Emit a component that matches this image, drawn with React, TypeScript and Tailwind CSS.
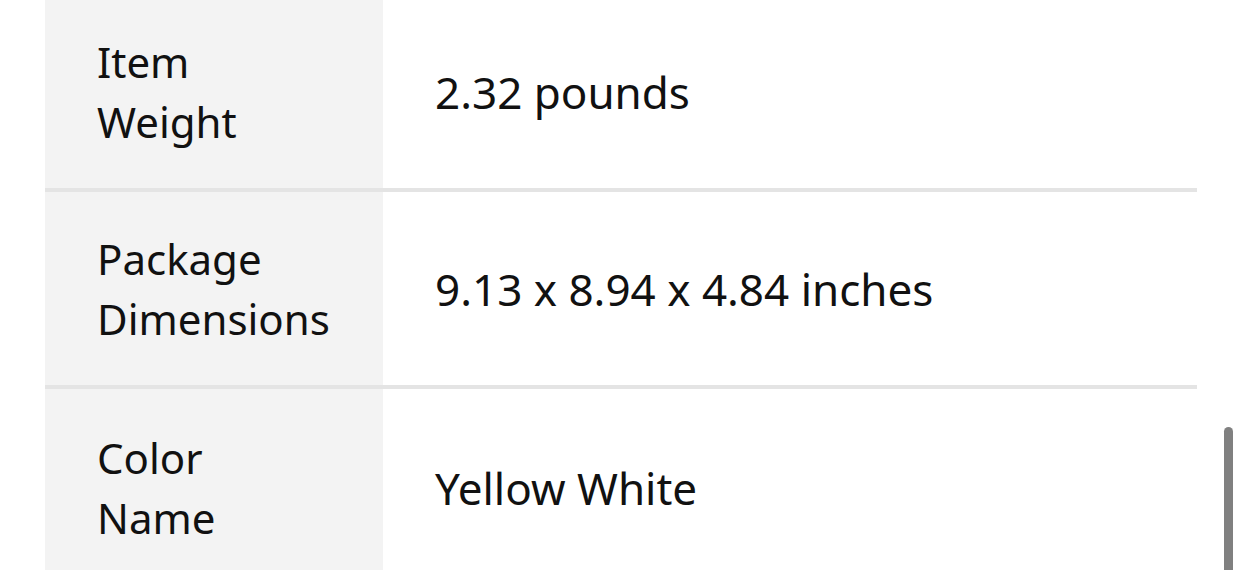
import React from 'react';

interface SpecRow {
    label: string[];
    value: string;
}

const rows: SpecRow[] = [
    { label: ['Item', 'Weight'], value: '2.32 pounds' },
    { label: ['Package', 'Dimensions'], value: '9.13 x 8.94 x 4.84 inches' },
    { label: ['Color', 'Name'], value: 'Yellow White' },
];

export default function App() {
    return (
        <div className="relative h-[570px] w-[1242px] overflow-hidden bg-white font-['Noto_Sans',sans-serif] text-[#111]">
            <div className="-mt-[5px] ml-[45px] w-[1152px]">
                {rows.map((row, i) => (
                    <div
                        key={row.value}
                        className={`flex h-[197px] ${i < rows.length - 1 ? 'border-b-4 border-[#e4e4e4]' : ''}`}
                    >
                        <div className="flex w-[338px] shrink-0 flex-col justify-center bg-[#f3f3f3] pl-[52px] text-[42px] leading-[60px]">
                            {row.label.map((l) => (
                                <span key={l}>{l}</span>
                            ))}
                        </div>
                        <div className="flex flex-1 items-center pl-[52px] text-[44px] leading-[60px]">
                            {row.value}
                        </div>
                    </div>
                ))}
            </div>
            <div className="absolute left-[1224px] top-[427px] h-[160px] w-[9px] rounded-full bg-[#808080]" />
        </div>
    );
}
